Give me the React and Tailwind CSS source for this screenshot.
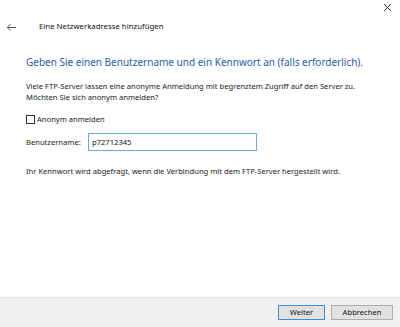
import { useState } from "react";

export default function App() {
  const [username, setUsername] = useState("p72712345");
  const [anonym, setAnonym] = useState(false);

  return (
    <div
      className="w-[400px] h-[327px] bg-white flex flex-col text-[#1a1a1a] overflow-hidden"
      style={{ fontFamily: '"Noto Sans", "Open Sans", sans-serif' }}
    >
      {/* title bar */}
      <div className="h-[14px] flex justify-end pr-[8px] pt-[3px]">
        <svg width="9" height="9" viewBox="0 0 9 9" className="text-[#333]">
          <path d="M1 1 L8 8 M8 1 L1 8" stroke="currentColor" strokeWidth="1" />
        </svg>
      </div>

      {/* header with back arrow */}
      <div className="flex items-center h-[26px] pl-[6px]">
        <svg width="11" height="9" viewBox="0 0 11 9" className="text-[#555]">
          <path d="M10 4.5 H1.5 M4.5 1.2 L1.2 4.5 L4.5 7.8" stroke="currentColor" strokeWidth="1" fill="none" />
        </svg>
        <span className="ml-[22px] text-[7.8px] text-[#111]">Eine Netzwerkadresse hinzufügen</span>
      </div>

      <div className="flex-1 flex flex-col pl-[26px] pr-[10px]">
        <h1 className="mt-[15px] text-[10px] leading-[14px] text-[#2a5ba8] whitespace-nowrap">
          Geben Sie einen Benutzername und ein Kennwort an (falls erforderlich).
        </h1>

        <p className="mt-[12px] text-[7.6px] leading-[11px] text-[#222] whitespace-nowrap">
          Viele FTP-Server lassen eine anonyme Anmeldung mit begrenztem Zugriff auf den Server zu.
          <br />
          Möchten Sie sich anonym anmelden?
        </p>

        <label className="mt-[11px] flex items-center gap-[2px] text-[7.6px] text-[#222]">
          <input
            type="checkbox"
            checked={anonym}
            onChange={(e) => setAnonym(e.target.checked)}
            className="appearance-none w-[9px] h-[9px] border border-[#333] bg-white m-0"
          />
          Anonym anmelden
        </label>

        <div className="mt-[8px] flex items-center">
          <span className="w-[62px] text-[7.6px] text-[#222]">Benutzername:</span>
          <input
            type="text"
            value={username}
            onChange={(e) => setUsername(e.target.value)}
            className="w-[169px] h-[18px] border border-[#6fa8dc] px-[3px] text-[7.6px] text-[#111] outline-none"
          />
        </div>

        <p className="mt-[15px] text-[7.6px] text-[#222] whitespace-nowrap">
          Ihr Kennwort wird abgefragt, wenn die Verbindung mit dem FTP-Server hergestellt wird.
        </p>
      </div>

      {/* footer */}
      <div className="h-[30px] bg-[#f0f0f0] border-t border-[#e3e3e3] flex items-center justify-end gap-[6px] pr-[7px]">
        <button className="w-[47px] h-[15px] bg-[#e1e1e1] border border-[#3c8fdb] text-[7.6px] text-[#111] flex items-center justify-center">
          Weiter
        </button>
        <button className="w-[62px] h-[15px] bg-[#e1e1e1] border border-[#adadad] text-[7.6px] text-[#111] flex items-center justify-center">
          Abbrechen
        </button>
      </div>
    </div>
  );
}
